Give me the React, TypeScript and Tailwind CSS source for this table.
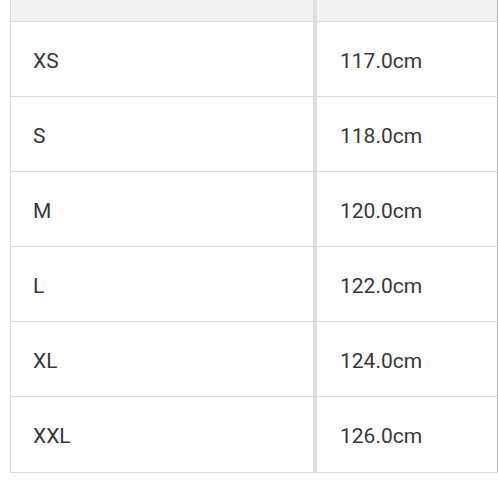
const rows = [
  { size: "XS", value: "117.0cm" },
  { size: "S", value: "118.0cm" },
  { size: "M", value: "120.0cm" },
  { size: "L", value: "122.0cm" },
  { size: "XL", value: "124.0cm" },
  { size: "XXL", value: "126.0cm" },
];

const App = () => {
  return (
    <div
      className="w-[498px] h-[498px] bg-white overflow-hidden pl-[10px]"
      style={{ fontFamily: "Roboto, 'Liberation Sans', sans-serif" }}
    >
      <div className="w-[488px] border-l border-b border-[#dcdcdc]">
        {/* header row, cut off at the top */}
        <div className="flex h-[22px] bg-[#f3f3f3] border-b border-[#dcdcdc]">
          <div className="w-[306px] border-r-[4px] border-[#dedede]" />
          <div className="flex-1 border-r border-[#b5b5b5]" />
        </div>

        {rows.map((row, i) => (
          <div
            key={row.size}
            className={`flex h-[75px] ${
              i < rows.length - 1 ? "border-b border-[#dcdcdc]" : ""
            }`}
          >
            <div className="w-[306px] flex items-center pl-[22px] pt-[5px] border-r-[4px] border-[#dedede] text-[21px] text-[#383838]">
              {row.size}
            </div>
            <div className="flex-1 flex items-center pl-[23px] pt-[5px] border-r border-[#b5b5b5] text-[21px] text-[#383838]">
              {row.value}
            </div>
          </div>
        ))}
      </div>
    </div>
  );
};

export default App;
